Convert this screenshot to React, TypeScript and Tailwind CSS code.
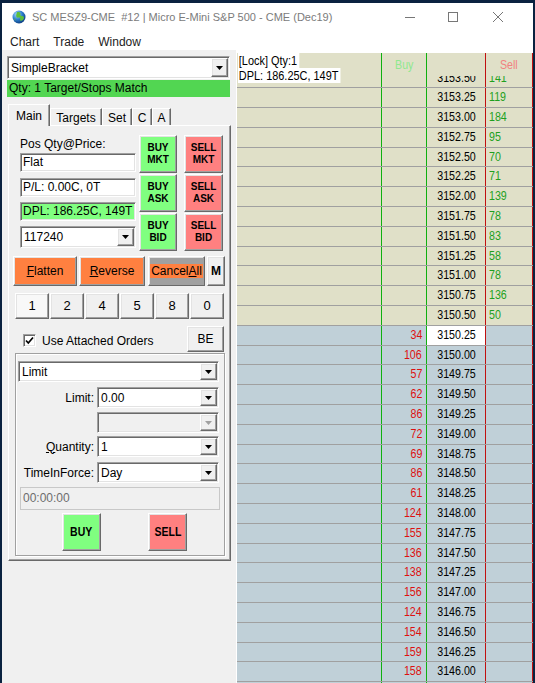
import React from "react";

const ui = "font-['Liberation_Sans',Arial,sans-serif]";
const sunken =
  "border border-t-[#a0a0a0] border-l-[#a0a0a0] border-b-white border-r-white shadow-[inset_1px_1px_0_#696969,inset_-1px_-1px_0_#e3e3e3] p-px";
const raised =
  "border border-t-white border-l-white border-b-[#696969] border-r-[#696969] shadow-[inset_-1px_-1px_0_#a0a0a0,inset_1px_1px_0_#e3e3e3]";

const asks: [string, string][] = [
  ["3153.50", "141"],
  ["3153.25", "119"],
  ["3153.00", "184"],
  ["3152.75", "95"],
  ["3152.50", "70"],
  ["3152.25", "71"],
  ["3152.00", "139"],
  ["3151.75", "78"],
  ["3151.50", "83"],
  ["3151.25", "58"],
  ["3151.00", "78"],
  ["3150.75", "136"],
  ["3150.50", "50"],
];

const bids: [string, string][] = [
  ["3150.25", "34"],
  ["3150.00", "106"],
  ["3149.75", "57"],
  ["3149.50", "62"],
  ["3149.25", "86"],
  ["3149.00", "72"],
  ["3148.75", "69"],
  ["3148.50", "86"],
  ["3148.25", "61"],
  ["3148.00", "124"],
  ["3147.75", "155"],
  ["3147.50", "136"],
  ["3147.25", "138"],
  ["3147.00", "156"],
  ["3146.75", "124"],
  ["3146.50", "154"],
  ["3146.25", "159"],
  ["3146.00", "158"],
];

function Arrow({ disabled }: { disabled?: boolean }) {
  return (
    <div className={`${raised} w-[17px] h-full bg-[#f0f0f0] flex items-center justify-center shrink-0`}>
      <svg width="7" height="4" viewBox="0 0 7 4">
        <path d="M0 0H7L3.5 4Z" fill={disabled ? "#a0a0a0" : "#000"} />
      </svg>
    </div>
  );
}

function Combo({ text, className = "", disabled }: { text?: string; className?: string; disabled?: boolean }) {
  return (
    <div className={`${sunken} flex ${className}`}>
      <div className={`flex-1 flex items-center pl-[2px] ${disabled ? "bg-[#f0f0f0]" : "bg-white"}`}>{text}</div>
      <Arrow disabled={disabled} />
    </div>
  );
}

function Btn({ className = "", children }: { className?: string; children?: React.ReactNode }) {
  return <div className={`${raised} flex items-center justify-center text-center ${className}`}>{children}</div>;
}

function Globe() {
  return (
    <svg width="14" height="14" viewBox="0 0 14 14">
      <defs>
        <radialGradient id="gl" cx="35%" cy="30%" r="75%">
          <stop offset="0" stopColor="#a8dcff" />
          <stop offset="0.55" stopColor="#2a7ccc" />
          <stop offset="1" stopColor="#0b3a7c" />
        </radialGradient>
      </defs>
      <circle cx="7" cy="7" r="6.5" fill="url(#gl)" />
      <path
        d="M5 2.2c1.6-.4 3 .1 3.4 1.1s-.6 1.9.5 2.4 2.6-.1 3 1.5-1 3-2.6 3.5-1.4-1-1-2.1-1.5-1.4-2.6-1S3.8 5.8 4.3 4.4z"
        fill="#5cbf3a"
      />
      <path d="M2 8.5c1 .2 1.6 1 1.5 2.2-.8-.5-1.3-1.2-1.5-2.2z" fill="#5cbf3a" />
    </svg>
  );
}

function TitleBar() {
  return (
    <div className="h-[28px] flex items-center bg-white shrink-0">
      <div className="ml-[10px]">
        <Globe />
      </div>
      <span className={`ml-[6px] text-[11px] text-[#7b7b7b] ${ui}`}>
        SC MESZ9-CME&nbsp;&nbsp;#12 | Micro E-Mini S&amp;P 500 - CME (Dec19)
      </span>
      <div className="ml-auto flex items-center">
        <div className="w-[10px] h-px bg-[#777]" />
        <div className="ml-[33px] w-[10px] h-[10px] border border-[#777]" />
        <svg className="ml-[35px] mr-[30px]" width="10" height="10" viewBox="0 0 10 10">
          <path d="M0 0L10 10M10 0L0 10" stroke="#777" strokeWidth="1" />
        </svg>
      </div>
    </div>
  );
}

function MenuBar() {
  return (
    <div className={`h-[19px] bg-white flex items-start pt-[4px] text-[12px] leading-[14px] text-[#222] shrink-0 ${ui}`}>
      <span className="ml-[8px]">Chart</span>
      <span className="ml-[14px]">Trade</span>
      <span className="ml-[14px]">Window</span>
    </div>
  );
}

function Tab({ label, w, active }: { label: string; w: string; active?: boolean }) {
  return (
    <div
      className={`${w} ${
        active ? "h-[22px] -mb-px relative z-10 pt-[4px]" : "h-[17px] pt-[2px]"
      } bg-[#f0f0f0] border-t border-l border-r border-t-white border-l-white border-r-[#696969] shadow-[inset_-1px_0_0_#a0a0a0] text-center leading-[14px]`}
    >
      {label}
    </div>
  );
}

function OrderPanel() {
  return (
    <div className={`w-[234px] h-full bg-[#f0f0f0] flex flex-col text-[12px] text-black shrink-0 ${ui}`}>
      <Combo text="SimpleBracket" className="mt-[6px] ml-[5px] w-[223px] h-[23px]" />
      <div className="mt-px ml-[5px] w-[223px] h-[17px] bg-[#52d652] pl-[2px] leading-[17px]">
        Qty: 1 Target/Stops Match
      </div>
      <div className="mt-[7px] ml-[6px] h-[21px] flex items-end">
        <Tab label="Main" w="w-[42px]" active />
        <Tab label="Targets" w="w-[52px]" />
        <Tab label="Set" w="w-[30px]" />
        <Tab label="C" w="w-[20px]" />
        <Tab label="A" w="w-[19px]" />
      </div>
      <div className="ml-[6px] w-[223px] h-[436px] border border-t-white border-l-white border-b-[#696969] border-r-[#696969] shadow-[inset_-1px_-1px_0_#a0a0a0] flex flex-col">
        <div className="mt-[9px] flex">
          <div className="ml-[11px] w-[116px] flex flex-col">
            <div className="mt-[2px] h-[14px] leading-[14px]">Pos Qty@Price:</div>
            <div className={`${sunken} mt-[2px] h-[19px] bg-white`}>
              <div className="pl-[1px] leading-[15px]">Flat</div>
            </div>
            <div className={`${sunken} mt-[6px] h-[19px] bg-white`}>
              <div className="pl-[1px] leading-[15px]">P/L: 0.00C, 0T</div>
            </div>
            <div className={`${sunken} mt-[5px] h-[19px] bg-[#80ff80]`}>
              <div className="pl-[1px] leading-[15px]">DPL: 186.25C, 149T</div>
            </div>
            <Combo text="117240" className="mt-[5px] h-[22px]" />
          </div>
          <div className="ml-[3px] grid grid-cols-[38px_39px] gap-x-[7px] gap-y-px auto-rows-[38px] text-[10px] font-bold leading-[12px]">
            <Btn className="bg-[#80ff80]">BUY<br />MKT</Btn>
            <Btn className="bg-[#ff8080]">SELL<br />MKT</Btn>
            <Btn className="bg-[#80ff80]">BUY<br />ASK</Btn>
            <Btn className="bg-[#ff8080]">SELL<br />ASK</Btn>
            <Btn className="bg-[#80ff80]">BUY<br />BID</Btn>
            <Btn className="bg-[#ff8080]">SELL<br />BID</Btn>
          </div>
        </div>
        <div className="mt-[5px] h-[30px] flex">
          <Btn className="ml-[4px] w-[64px] bg-[#ff8040]">
            <span><u>F</u>latten</span>
          </Btn>
          <Btn className="ml-[2px] w-[66px] bg-[#ff8040]">
            <span><u>R</u>everse</span>
          </Btn>
          <Btn className="ml-[3px] w-[57px] bg-[#a0a0a0]">
            <span className="bg-[#ff8040] px-px leading-[14px]">Cancel<u>A</u>ll</span>
          </Btn>
          <Btn className="ml-[2px] w-[18px] bg-[#f0f0f0] font-bold">M</Btn>
        </div>
        <div className="mt-[7px] ml-[6px] h-[26px] flex gap-px text-[13px]">
          {["1", "2", "4", "5", "8", "0"].map((n, i) => (
            <Btn key={n} className={`w-[34px] ${i === 0 ? "bg-[#f8f8f8]" : "bg-[#f0f0f0]"}`}>
              {n}
            </Btn>
          ))}
        </div>
        <div className="mt-[7px] h-[26px] flex items-start">
          <div className={`${sunken} ml-[14px] mt-[8px] w-[13px] h-[13px] bg-white flex items-center justify-center`}>
            <svg width="9" height="9" viewBox="0 0 9 9">
              <path d="M1 4.5L3.3 7L8 1.5" stroke="#000" strokeWidth="1.7" fill="none" />
            </svg>
          </div>
          <span className="ml-[6px] mt-[8px] leading-[14px]">Use Attached Orders</span>
          <Btn className="ml-auto mr-[6px] w-[37px] h-[26px] bg-[#f0f0f0]">BE</Btn>
        </div>
        <div className="mt-px ml-[6px] w-[210px] h-[203px] border border-[#a0a0a0] shadow-[inset_1px_1px_0_#fff,1px_1px_0_#fff] flex flex-col">
          <Combo text="Limit" className="mt-[7px] ml-[2px] w-[201px] h-[21px]" />
          {[
            { label: "Limit:", text: "0.00", mt: "mt-[5px]" },
            { label: "", text: "", mt: "mt-[4px]", disabled: true },
            { label: "Quantity:", text: "1", mt: "mt-[3px]", q: true },
            { label: "TimeInForce:", text: "Day", mt: "mt-[5px]" },
          ].map((r, i) => (
            <div key={i} className={`${r.mt} h-[21px] flex items-center`}>
              <div className="w-[78px] text-right">
                {r.q ? (
                  <span>
                    <u>Q</u>uantity:
                  </span>
                ) : (
                  r.label
                )}
              </div>
              <Combo text={r.text} disabled={r.disabled} className="ml-[3px] w-[122px] h-[21px]" />
            </div>
          ))}
          <div className="mt-[4px] ml-[4px] w-[200px] h-[23px] border border-[#c8c8c8] bg-[#f0f0f0] text-[#6d6d6d] pl-[2px] leading-[21px]">
            00:00:00
          </div>
          <div className="mt-[3px] h-[38px] flex text-[12.5px] font-bold">
            <Btn className="ml-[46px] w-[39px] bg-[#80ff80]">
              <span className="inline-block scale-x-[0.84]">BUY</span>
            </Btn>
            <Btn className="ml-[47px] w-[39px] bg-[#ff8080]">
              <span className="inline-block scale-x-[0.84]">SELL</span>
            </Btn>
          </div>
        </div>
      </div>
    </div>
  );
}

function DomRow({ price, qty, side, hl }: { price?: string; qty?: string; side: "ask" | "bid"; hl?: boolean }) {
  const bg = side === "ask" ? "bg-[#e0e0c8]" : "bg-[#c0d0d8]";
  return (
    <div className={`flex h-[19.8px] shrink-0 border-t border-t-[#a0a0a0] ${bg}`}>
      <div className="w-[145px] border-r border-r-[#10b010]" />
      <div className="w-[45px] border-r border-r-[#10b010] text-right pr-[4px] text-[#dd1111]">
        {side === "bid" && qty ? <span className="inline-block scale-x-[0.82] origin-right">{qty}</span> : null}
      </div>
      <div className={`w-[59px] border-r border-r-[#c01010] text-center text-black ${hl ? "bg-white" : ""}`}>
        {price ? <span className="inline-block scale-x-[0.82] origin-center">{price}</span> : null}
      </div>
      <div className="w-[47px] border-r border-r-[#c01010] pl-[3px] text-[#1ea01e]">
        {side === "ask" && qty ? <span className="inline-block scale-x-[0.82] origin-left">{qty}</span> : null}
      </div>
    </div>
  );
}

function Dom() {
  return (
    <div
      className={`relative w-[297px] h-full flex flex-col border-l border-l-white border-t-[3px] border-t-white bg-[#c0d0d8] text-[13px] leading-[18px] ${ui}`}
    >
      <div className="flex h-[23px] shrink-0 bg-[#e0e0c8] leading-[23px] relative z-10">
        <div className="w-[145px] border-r border-r-[#10b010]" />
        <div className="w-[45px] border-r border-r-[#10b010] text-center text-[#8fe88f]">
          <span className="inline-block scale-x-[0.82]">Buy</span>
        </div>
        <div className="w-[59px] border-r border-r-[#c01010]" />
        <div className="w-[47px] border-r border-r-[#c01010] text-center text-[#f08080]">
          <span className="inline-block scale-x-[0.82]">Sell</span>
        </div>
      </div>
      <div className="flex-1 overflow-hidden flex flex-col">
        <div className="-mt-[8.5px] flex flex-col">
          {asks.map(([p, q]) => (
            <DomRow key={p} price={p} qty={q} side="ask" />
          ))}
          {bids.map(([p, q], i) => (
            <DomRow key={p} price={p} qty={q} side="bid" hl={i === 0} />
          ))}
          <DomRow side="bid" />
        </div>
      </div>
      <div className="absolute left-[1px] top-0 z-20 flex flex-col items-start text-black leading-[15px] scale-x-[0.84] origin-top-left">
        <span className="bg-white pl-px pr-[3px]">[Lock] Qty:1</span>
        <span className="bg-white pl-px pr-[2px]">DPL: 186.25C, 149T</span>
      </div>
    </div>
  );
}

export default function App() {
  return (
    <div className="w-[535px] h-[683px] bg-[#0a2240] overflow-hidden">
      <div className="ml-[2px] mt-[3px] w-[531px] h-[680px] flex flex-col bg-white">
        <TitleBar />
        <MenuBar />
        <div className="flex-1 flex min-h-0">
          <OrderPanel />
          <Dom />
        </div>
      </div>
    </div>
  );
}
